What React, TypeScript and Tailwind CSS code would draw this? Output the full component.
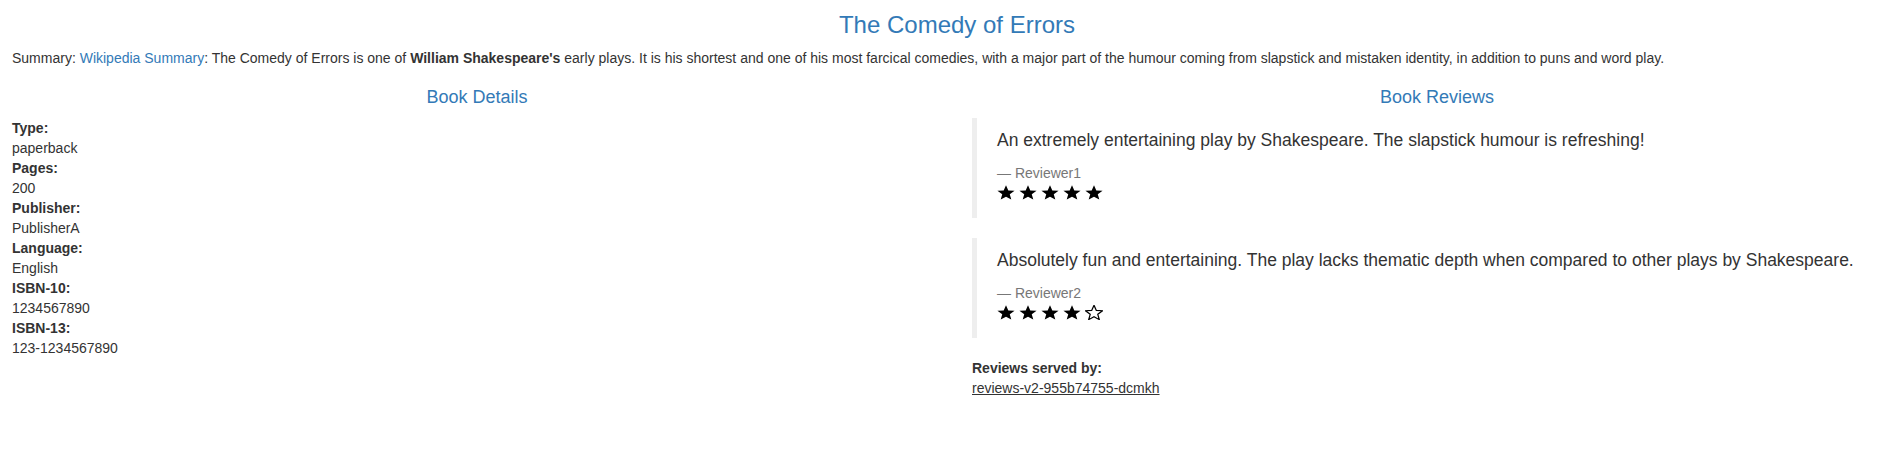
import React from "react";

function Star({ filled }: { filled: boolean }) {
  const pts = "50,2 62.93,34.2 97.55,36.55 70.92,58.8 79.39,92.45 50,74 20.61,92.45 29.08,58.8 2.45,36.55 37.07,34.2";
  return (
    <svg viewBox="0 0 100 95" className="w-[18px] h-[15px] block" preserveAspectRatio="none">
      {filled ? (
        <polygon points={pts} fill="#000" />
      ) : (
        <polygon points={pts} fill="none" stroke="#000" strokeWidth="7" strokeLinejoin="miter" />
      )}
    </svg>
  );
}

function Stars({ n }: { n: number }) {
  return (
    <div className="flex gap-[4px] h-[25px] pt-[2px]">
      {[0, 1, 2, 3, 4].map((i) => (
        <Star key={i} filled={i < n} />
      ))}
    </div>
  );
}

function Review({ text, who, stars }: { text: string; who: string; stars: number }) {
  return (
    <blockquote className="border-l-[5px] border-[#eeeeee] px-[20px] py-[10px] mb-[20px] text-[17.5px] leading-[25px]">
      <p className="mb-[10px]">{text}</p>
      <small className="block text-[14px] leading-[20px] text-[#777777]">{"\u2014\u00a0" + who}</small>
      <Stars n={stars} />
    </blockquote>
  );
}

export default function App() {
  const details: [string, string][] = [
    ["Type:", "paperback"],
    ["Pages:", "200"],
    ["Publisher:", "PublisherA"],
    ["Language:", "English"],
    ["ISBN-10:", "1234567890"],
    ["ISBN-13:", "123-1234567890"],
  ];
  return (
    <div className="w-full min-h-[466px] overflow-hidden bg-white font-['Liberation_Sans',Arial,sans-serif] text-[14px] leading-[20px] text-[#333333]">
      <div className="w-[1920px] -ml-[3px] px-[15px] pt-[12px]">
        <h3 className="text-center text-[#337ab7] text-[24px] leading-[1.1] mb-[10px] font-normal">
          The Comedy of Errors
        </h3>
        <p className="mb-[10px]">
          Summary: <a className="text-[#337ab7]">Wikipedia Summary</a>: The Comedy of Errors is one of{" "}
          <b>William Shakespeare's</b> early plays. It is his shortest and one of his most farcical comedies, with a
          major part of the humour coming from slapstick and mistaken identity, in addition to puns and word play.
        </p>
      </div>
      <div className="w-[1920px] -ml-[3px] grid grid-cols-2">
        <div className="px-[15px]">
          <h4 className="text-center text-[#337ab7] text-[18px] leading-[1.1] mt-[10px] mb-[10px] font-normal">
            Book Details
          </h4>
          <dl className="mb-[20px]">
            {details.map(([k, v]) => (
              <React.Fragment key={k}>
                <dt className="font-bold">{k}</dt>
                <dd>{v}</dd>
              </React.Fragment>
            ))}
          </dl>
        </div>
        <div className="px-[15px]">
          <h4 className="text-center text-[#337ab7] text-[18px] leading-[1.1] mt-[10px] mb-[10px] font-normal">
            Book Reviews
          </h4>
          <Review
            text="An extremely entertaining play by Shakespeare. The slapstick humour is refreshing!"
            who="Reviewer1"
            stars={5}
          />
          <Review
            text="Absolutely fun and entertaining. The play lacks thematic depth when compared to other plays by Shakespeare."
            who="Reviewer2"
            stars={4}
          />
          <dl className="mb-[20px]">
            <dt className="font-bold">Reviews served by:</dt>
            <dd>
              <u>reviews-v2-955b74755-dcmkh</u>
            </dd>
          </dl>
        </div>
      </div>
    </div>
  );
}
